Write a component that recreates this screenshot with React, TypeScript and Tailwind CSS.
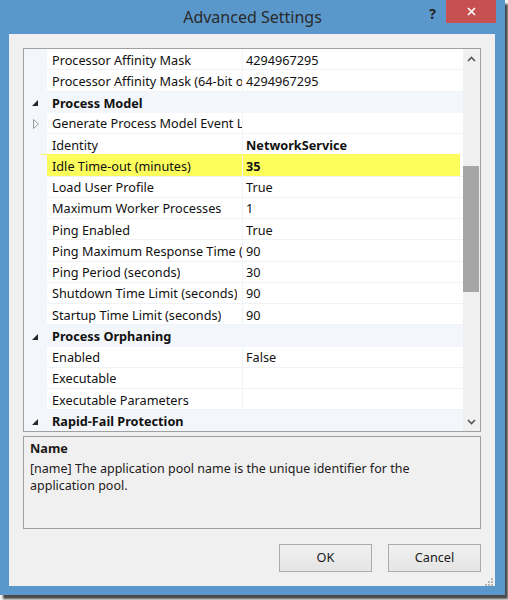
import React from "react";

type Row =
  | { kind: "cat"; name: string }
  | { kind: "prop"; name: string; value?: string; bold?: boolean; expand?: boolean; hl?: boolean };

const rows: Row[] = [
  { kind: "prop", name: "Processor Affinity Mask", value: "4294967295" },
  { kind: "prop", name: "Processor Affinity Mask (64-bit option)", value: "4294967295" },
  { kind: "cat", name: "Process Model" },
  { kind: "prop", name: "Generate Process Model Event Log Entry", value: "", expand: true },
  { kind: "prop", name: "Identity", value: "NetworkService", bold: true },
  { kind: "prop", name: "Idle Time-out (minutes)", value: "35", bold: true, hl: true },
  { kind: "prop", name: "Load User Profile", value: "True" },
  { kind: "prop", name: "Maximum Worker Processes", value: "1" },
  { kind: "prop", name: "Ping Enabled", value: "True" },
  { kind: "prop", name: "Ping Maximum Response Time (seconds)", value: "90" },
  { kind: "prop", name: "Ping Period (seconds)", value: "30" },
  { kind: "prop", name: "Shutdown Time Limit (seconds)", value: "90" },
  { kind: "prop", name: "Startup Time Limit (seconds)", value: "90" },
  { kind: "cat", name: "Process Orphaning" },
  { kind: "prop", name: "Enabled", value: "False" },
  { kind: "prop", name: "Executable", value: "" },
  { kind: "prop", name: "Executable Parameters", value: "" },
  { kind: "cat", name: "Rapid-Fail Protection" },
];

function CatIcon() {
  return (
    <svg width="6" height="6" viewBox="0 0 6 6" className="block">
      <polygon points="6,0 6,6 0,6" fill="#262626" />
    </svg>
  );
}

function ExpandIcon() {
  return (
    <svg width="6" height="10" viewBox="0 0 6 10" className="block">
      <polygon points="0.5,0.5 5.5,5 0.5,9.5" fill="none" stroke="#9a9a9a" strokeWidth="1" />
    </svg>
  );
}

function GridRow({ row }: { row: Row }) {
  if (row.kind === "cat") {
    return (
      <div className="flex h-[21.25px] shrink-0 items-center bg-[#f3f6fb]">
        <div className="flex w-[23px] shrink-0 items-center justify-end pr-[9px] pt-[2px]">
          <CatIcon />
        </div>
        <div className="whitespace-nowrap pl-[5px] pt-[2px] font-bold text-[#111]">{row.name}</div>
      </div>
    );
  }
  return (
    <div className="relative flex h-[21.25px] shrink-0">
      {row.hl && <div className="absolute left-[17px] right-[3px] top-[-1px] bottom-[-1px] bg-[#fdfd5c]" />}
      <div className="relative flex w-[23px] shrink-0 items-center justify-end bg-[#f3f6fb] pr-[8px] pt-[1px]">
        {row.expand && <ExpandIcon />}
      </div>
      <div
        className={`relative flex w-[195px] shrink-0 items-center overflow-hidden whitespace-nowrap border-b border-[#f0f2f5] pl-[5px] pt-[2px] text-[#111] ${row.hl ? "" : "bg-white"}`}
      >
        <span className="block overflow-hidden">{row.name}</span>
      </div>
      <div
        className={`relative flex flex-1 items-center overflow-hidden whitespace-nowrap border-b border-l border-[#f0f2f5] pl-[3px] pt-[2px] text-[#111] ${row.bold ? "font-bold" : ""} ${row.hl ? "" : "bg-white"}`}
      >
        {row.value}
      </div>
    </div>
  );
}

function Chevron({ up }: { up?: boolean }) {
  return (
    <svg width="9" height="6" viewBox="0 0 9 6" className="block">
      <polyline
        points={up ? "1,5 4.5,1.5 8,5" : "1,1 4.5,4.5 8,1"}
        fill="none"
        stroke="#555"
        strokeWidth="1.6"
      />
    </svg>
  );
}

function SizeGrip() {
  return (
    <svg width="10" height="10" viewBox="0 0 10 10" className="block">
      {[
        [8, 0],
        [8, 3],
        [5, 3],
        [8, 6],
        [5, 6],
        [2, 6],
      ].map(([x, y], i) => (
        <rect key={i} x={x} y={y + 2} width="2" height="2" fill="#b5b5b5" />
      ))}
    </svg>
  );
}

export default function App() {
  return (
    <div className="flex h-[600px] w-[508px] bg-[#f4f4f4]" style={{ fontFamily: '"Noto Sans", "Open Sans", sans-serif' }}>
      <div className="flex h-[595px] w-[505px] flex-col bg-[#5a98cc] shadow-[3px_4px_2px_rgba(0,0,0,0.7)]">
        {/* Title bar */}
        <div className="grid h-[34px] shrink-0 grid-cols-[1fr_auto_1fr]">
          <div />
          <div className="pt-[5px] text-[16px] text-[#2a2a2a]">Advanced Settings</div>
          <div className="flex items-start justify-end pr-[9px]">
            <div className="mr-[10px] pt-[3px] text-[14px] font-bold text-[#222]">?</div>
            <div className="flex h-[23px] w-[50px] items-center justify-center bg-[#c75050]">
              <svg width="9" height="9" viewBox="0 0 9 9">
                <path d="M1 1 L8 8 M8 1 L1 8" stroke="#fff" strokeWidth="1.7" />
              </svg>
            </div>
          </div>
        </div>

        {/* Client area */}
        <div className="mx-[9px] mr-[10px] flex flex-1 flex-col bg-[#f0f0f0] px-[14px] pt-[14px] text-[12.7px]">
          {/* Property grid */}
          <div className="flex h-[384px] shrink-0 border border-[#a0a0a0] bg-white">
            <div className="flex w-[439px] flex-col overflow-hidden">
              {rows.map((r, i) => (
                <GridRow key={i} row={r} />
              ))}
            </div>
            <div className="flex flex-1 flex-col bg-[#f0f0f0]">
              <div className="flex h-[17px] items-center justify-center pt-[3px]">
                <Chevron up />
              </div>
              <div className="flex-1">
                <div className="mt-[100px] h-[126px] w-[16px] bg-[#a6a6a6]" />
              </div>
              <div className="flex h-[17px] items-center justify-center pb-[2px]">
                <Chevron />
              </div>
            </div>
          </div>

          {/* Description */}
          <div className="mt-[4px] h-[93px] shrink-0 border border-[#a0a0a0] px-[6px] pt-[3px] text-[#1e1a1a]">
            <div className="font-bold leading-[17px]">Name</div>
            <div className="mt-[3px] text-[12.5px] leading-[17px]">
              [name] The application pool name is the unique identifier for the
              <br />
              application pool.
            </div>
          </div>

          {/* Buttons */}
          <div className="mt-[15px] flex justify-end gap-[16px]">
            <button className="h-[28px] w-[93px] border border-[#acacac] bg-gradient-to-b from-[#f0f0f0] to-[#e5e5e5] text-[12.7px] text-[#1a1a1a]">
              OK
            </button>
            <button className="h-[28px] w-[93px] border border-[#acacac] bg-gradient-to-b from-[#f0f0f0] to-[#e5e5e5] text-[12.7px] text-[#1a1a1a]">
              Cancel
            </button>
          </div>
          <div className="mr-[-12px] mt-[4px] flex justify-end">
            <SizeGrip />
          </div>
        </div>
        <div className="h-[9px] shrink-0" />
      </div>
    </div>
  );
}
